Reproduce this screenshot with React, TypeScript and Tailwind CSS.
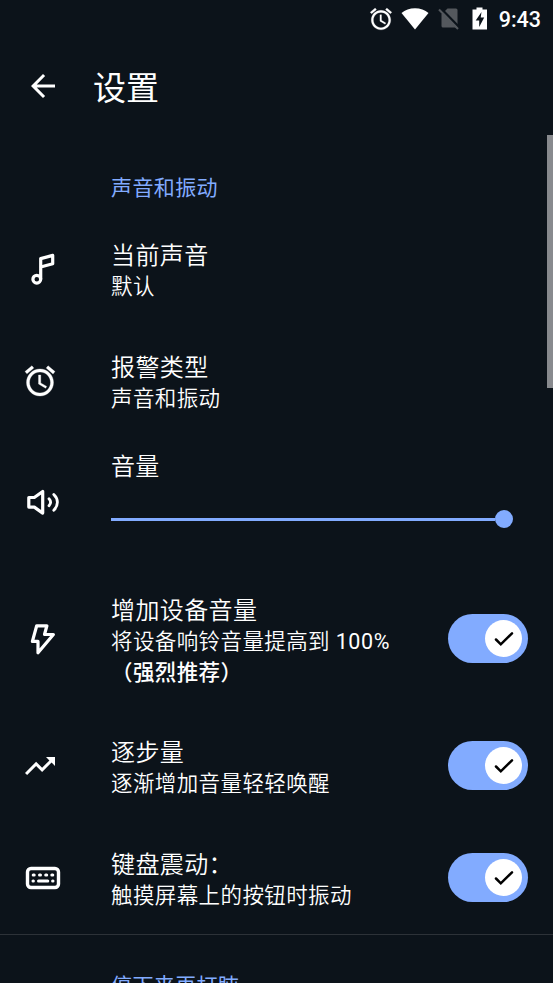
import React, { useState } from "react";
import clsx from "clsx";

type SettingRowProps = {
  icon: React.ReactNode;
  title: string;
  children?: React.ReactNode;
  className?: string;
  checked?: boolean;
  onToggle?: () => void;
};

const AlarmIcon = ({ className }: { className: string }) => (
  <svg viewBox="0 0 24 24" fill="currentColor" className={className}>
    <path
      stroke="currentColor"
      strokeWidth=".2"
      d="M22 5.72l-4.6-3.86-1.29 1.53 4.6 3.86L22 5.72zM7.88 3.39L6.6 1.86 2 5.71l1.29 1.53 4.59-3.85zM12.5 8H11v6l4.75 2.85.75-1.23-4-2.37V8zM12 4c-4.97 0-9 4.03-9 9s4.02 9 9 9c4.97 0 9-4.03 9-9s-4.03-9-9-9zm0 16c-3.87 0-7-3.13-7-7s3.13-7 7-7 7 3.13 7 7-3.13 7-7 7z"
    />
  </svg>
);

const MusicIcon = () => (
  <svg width="40" height="40" viewBox="0 0 40 40" fill="none" stroke="#fff" strokeWidth="3.2">
    <circle cx="16.8" cy="30.2" r="3.9" />
    <path d="M20.700 30.200V9.600L32.700 6.400V14.800L20.700 18" strokeLinejoin="round" />
  </svg>
);

const VolumeIcon = () => (
  <svg width="40" height="40" viewBox="0 0 40 40" fill="none" stroke="#fff" strokeWidth="3.200">
    <path d="M8.800 15.500h5.500l8.400-6v21.600l-8.400-6H8.800z" strokeLinejoin="round" />
    <path d="M29 16.800q3.200 3.500 0 7M33.800 12.400c4.800 4.600 4.800 11.200 0 15.800" strokeLinecap="round" strokeWidth="2.800" />
  </svg>
);

const BoltIcon = () => (
  <svg width="40" height="40" viewBox="0 0 40 40" fill="none" stroke="#fff" strokeWidth="3.200" strokeLinejoin="round">
    <path d="M16.700 7.800h10.200l-2.400 8.700h8.900L18 34.800V23.400h-5.600z" />
  </svg>
);

const TrendIcon = () => (
  <svg viewBox="0 0 24 24" fill="currentColor" className="ml-0.5 mt-0.5 size-9">
    <path d="M16 6l2.29 2.29-4.88 4.88-4-4L2 16.59 3.41 18l6-6 4 4 6.3-6.29L22 12V6z" />
  </svg>
);

const KeyboardIcon = () => (
  <svg width="42" height="40" viewBox="0 0 42 40" fill="none" stroke="#fff" strokeWidth="3.4">
    <rect x="7.500" y="11.500" width="31" height="19" rx="3.500" />
    <path
      d="M13.200 18h1M19.500 18h1M25.700 18h1M31.800 18h1M13 24h.4M18.500 24h9.300M32.600 24h.4"
      strokeWidth="3"
      strokeLinecap="round"
    />
  </svg>
);

const StatusBar = () => (
  <div className="flex h-[38px] items-center justify-end pr-3">
    <AlarmIcon className="mr-[7px] size-[26px]" />
    <svg width="28" height="22" viewBox="0 0 28 22" className="mr-[9px]">
      <path d="M14 21.500L.5 5C4 2 8.800 .3 14 .3S24 2 27.500 5z" fill="#fff" />
    </svg>
    <svg width="22" height="24" viewBox="0 0 22 24" className="mr-3">
      <path d="M3.500 7.500L9.500 1.500h8.500a1.500 1.500 0 0 1 1.500 1.500V20.500H5a1.500 1.500 0 0 1-1.500-1.500z" fill="#54585d" />
      <path d="M3 1.500l18 18.500" stroke="#0c131a" strokeWidth="2.500" />
      <path d="M1 2.500l19 19.500" stroke="#54585d" strokeWidth="2" />
    </svg>
    <svg width="16" height="24" viewBox="0 0 16 24" className="mr-[11px]">
      <path d="M4.500 .5h6v2H15v20H.500v-20h4z" fill="#fff" />
      <path d="M9.500 5L3.700 13.500h3.500v6.500L12.200 10.500H8.700z" fill="#0c131a" />
    </svg>
    <span className="pt-0.5 font-[Roboto] text-[21.5px] font-medium">9:43</span>
  </div>
);

const Toggle = ({ checked, onToggle }: { checked: boolean; onToggle?: () => void }) => (
  <button
    type="button"
    role="switch"
    aria-checked={checked}
    onClick={onToggle}
    className={clsx(
      "mr-[24.6px] flex h-[49px] w-20 shrink-0 items-center rounded-full px-1.5 pt-px",
      checked ? "justify-end bg-[#82abff]" : "justify-start bg-gray-600"
    )}
  >
    <span className="flex size-[37px] items-center justify-center rounded-full bg-white">
      {checked && (
        <svg width="20" height="16" viewBox="0 0 20 16" fill="none" stroke="#000" strokeWidth="2.500">
          <path d="M2 8.500l4.800 4.800L18 2.300" strokeLinecap="round" />
        </svg>
      )}
    </span>
  </button>
);

const SettingRow = ({ icon, title, children, className, checked, onToggle }: SettingRowProps) => (
  <div className={clsx("flex items-center pb-0.5", className)}>
    <div className="flex w-[111px] shrink-0 pl-5">{icon}</div>
    <div className={clsx("flex-1 whitespace-nowrap", checked === undefined ? "pt-[5px]" : "pt-[7px]")}>
      <div className="text-[24px] leading-8 tracking-[0.4px]">{title}</div>
      <div className="text-[21.5px] leading-[30.5px] tracking-[0.4px]">{children}</div>
    </div>
    {checked !== undefined && <Toggle checked={checked} onToggle={onToggle} />}
  </div>
);

const App: React.FC = () => {
  const [boost, setBoost] = useState(true);
  const [gradual, setGradual] = useState(true);
  const [vibrate, setVibrate] = useState(true);

  return (
    <div className="relative h-[983px] w-[553px] overflow-hidden bg-[#0c131a] font-[Roboto,'Noto_Sans_CJK_SC',sans-serif] font-[350] text-white">
      <StatusBar />
      <header className="flex h-[97px] items-center pl-[25px]">
        <svg viewBox="0 0 24 24" fill="currentColor" className="mb-0.5 size-9">
          <path d="M20 11H7.830l5.590-5.590L12 4l-8 8 8 8 1.410-1.410L7.830 13H20v-2z" />
        </svg>
        <h1 className="ml-8 pt-1 text-[33px] font-normal">设置</h1>
      </header>

      <h2 className="flex h-[79px] items-center pl-[111px] pt-[29px] text-[21px] font-normal tracking-[0.4px] text-[#82abff]">
        声音和振动
      </h2>
      <SettingRow icon={<MusicIcon />} title="当前声音" className="h-28">
        默认
      </SettingRow>
      <SettingRow icon={<AlarmIcon className="ml-0.5 size-9" />} title="报警类型" className="h-28">
        声音和振动
      </SettingRow>

      <div className="flex h-[130px] items-center">
        <div className="w-[111px] shrink-0 pb-0.5 pl-5">
          <VolumeIcon />
        </div>
        <div className="h-full w-[402px] pt-[13px]">
          <div className="text-[24px] leading-8 tracking-[0.2px]">音量</div>
          <div className="mt-[27px] flex items-center">
            <div className="h-[3px] flex-1 bg-[#82abff]" />
            <div className="size-[18px] rounded-full bg-[#82abff]" />
          </div>
        </div>
      </div>

      <SettingRow
        icon={<BoltIcon />}
        title="增加设备音量"
        className="h-[142px]"
        checked={boost}
        onToggle={() => setBoost(!boost)}
      >
        将设备响铃音量提高到 <span className="font-normal tracking-[0.6px]">100%</span>
        <br />
        <span className="font-medium">（强烈推荐）</span>
      </SettingRow>
      <SettingRow
        icon={<TrendIcon />}
        title="逐步量"
        className="h-28"
        checked={gradual}
        onToggle={() => setGradual(!gradual)}
      >
        逐渐增加音量轻轻唤醒
      </SettingRow>
      <SettingRow
        icon={<KeyboardIcon />}
        title="键盘震动："
        className="h-28"
        checked={vibrate}
        onToggle={() => setVibrate(!vibrate)}
      >
        触摸屏幕上的按钮时振动
      </SettingRow>

      <div className="border-t border-[#2d3238] pl-[111px] pt-9 text-[21px] font-normal tracking-[0.4px] text-[#82abff]">
        停下来再打盹
      </div>

      {/* scrollbar thumb */}
      <div className="absolute right-0 top-[135px] h-[253px] w-1.5 bg-[#888a8e]" />
    </div>
  );
};

export default App;
